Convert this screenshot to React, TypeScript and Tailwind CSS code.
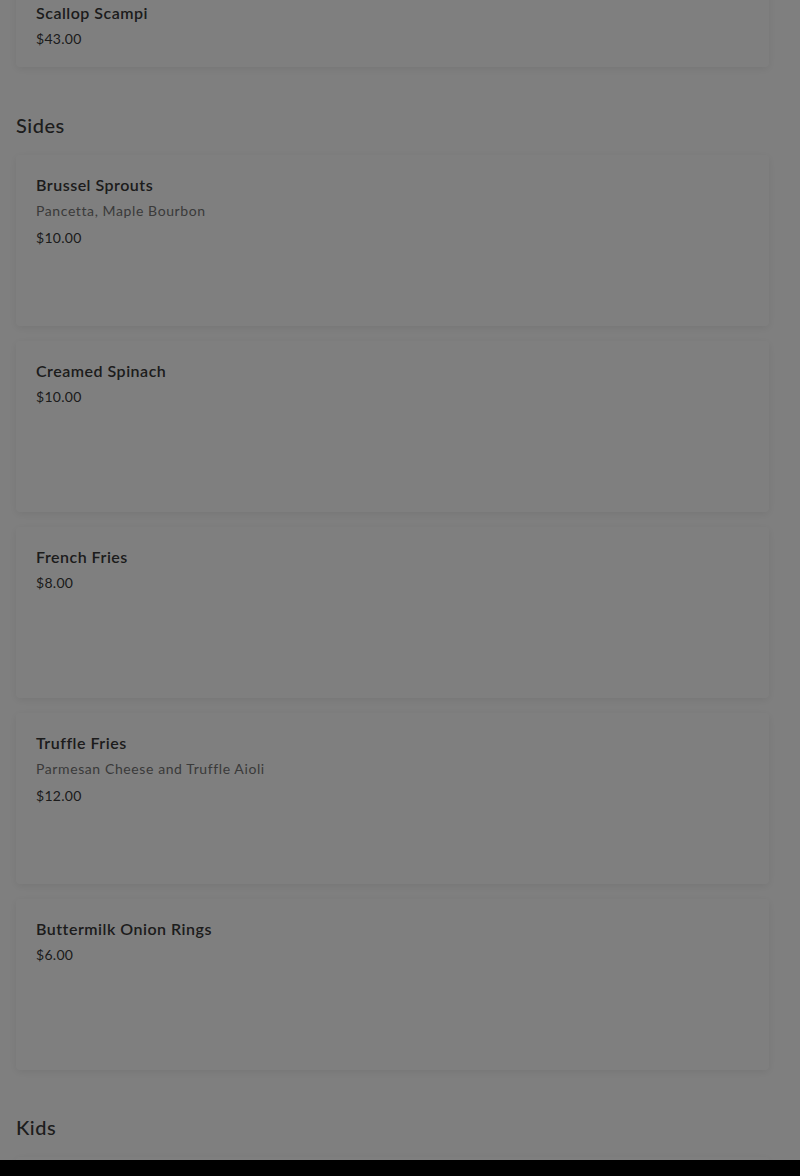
import React from 'react';

type Item = { name: string; desc?: string; price: string };

const sides: Item[] = [
  { name: 'Brussel Sprouts', desc: 'Pancetta, Maple Bourbon', price: '$10.00' },
  { name: 'Creamed Spinach', price: '$10.00' },
  { name: 'French Fries', price: '$8.00' },
  { name: 'Truffle Fries', desc: 'Parmesan Cheese and Truffle Aioli', price: '$12.00' },
  { name: 'Buttermilk Onion Rings', price: '$6.00' },
];

function MenuCard({ item, tall = true }: { item: Item; tall?: boolean }) {
  return (
    <div
      className={`bg-white rounded shadow-[0_2px_8px_rgba(0,0,0,0.08)] px-5 pt-5 pb-[18px] flex flex-col gap-1.5 ${
        tall ? 'h-[171px]' : ''
      }`}
    >
      <p className="text-base leading-5 font-semibold text-[#383838] tracking-[0.5px]">{item.name}</p>
      {item.desc && (
        <p className="text-sm leading-5 text-[#757575] tracking-[0.6px] mb-px">{item.desc}</p>
      )}
      <p className="text-sm leading-5 text-[#383838] tracking-[0.3px]">{item.price}</p>
    </div>
  );
}

export default function App() {
  return (
    <div className="relative h-[1176px] overflow-hidden bg-white" style={{ fontFamily: 'Lato, "Open Sans", sans-serif' }}>
      <div className="pl-4 pr-[31px]">
        {/* tail of the previous section */}
        <div className="-mt-[17px]">
          <MenuCard item={{ name: 'Scallop Scampi', price: '$43.00' }} tall={false} />
        </div>

        {/* SIDES */}
        <h2 className="mt-[44px] mb-4 text-xl leading-7 font-medium text-[#3a3a3a] tracking-[0.5px]">Sides</h2>
        <div className="flex flex-col gap-[15px]">
          {sides.map((s) => (
            <MenuCard key={s.name} item={s} />
          ))}
        </div>

        {/* KIDS */}
        <h2 className="mt-[43px] mb-4 text-xl leading-7 font-medium text-[#3a3a3a] tracking-[0.5px]">Kids</h2>
        <div className="h-[171px] bg-white rounded shadow-[0_2px_8px_rgba(0,0,0,0.08)]" />
      </div>

      {/* modal backdrop */}
      <div className="absolute inset-0 bg-black/50" />
      <div className="absolute left-0 right-0 bottom-0 h-4 bg-black" />
    </div>
  );
}
